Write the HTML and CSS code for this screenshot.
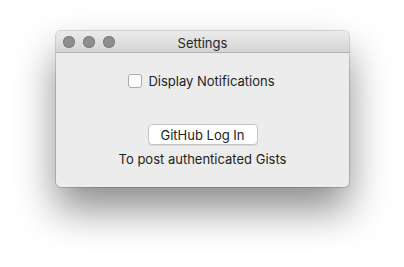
FILE: index.html
```html
<!DOCTYPE html>
<html lang="en">
<head>
  <meta charset="UTF-8">
  <title>Settings</title>
  <link rel="stylesheet" href="styles.css">
</head>
<body>
  <div class="window">
    <div class="titlebar">
      <div class="lights">
        <span class="light"></span>
        <span class="light"></span>
        <span class="light"></span>
      </div>
      <div class="title">Settings</div>
    </div>
    <div class="content">
      <label class="check-row">
        <span class="checkbox"></span>
        <span>Display Notifications</span>
      </label>
      <button class="login-btn">GitHub Log In</button>
      <div class="note">To post authenticated Gists</div>
    </div>
  </div>
</body>
</html>
```

FILE: styles.css
```css
html, body {
  height: 100%;
}
body {
  margin: 0;
  padding-top: 31px;
  box-sizing: border-box;
  background-color: #fff;
  font-family: Inter, "Helvetica Neue", "Liberation Sans", sans-serif;
  font-size: 13px;
  color: #222;
}
.window {
  width: 293px;
  height: 156px;
  margin-left: 56px;
  background-color: #ececec;
  border-radius: 5px;
  box-shadow: 0 0 0 1px rgba(0,0,0,0.15), 0 22px 40px rgba(0,0,0,0.46);
  display: flex;
  flex-direction: column;
  overflow: hidden;
}
.titlebar {
  height: 21px;
  background: linear-gradient(#ebebeb, #d5d5d5);
  border-bottom: 1px solid #b1b1b1;
  position: relative;
  display: flex;
  align-items: center;
  justify-content: center;
}
.lights {
  position: absolute;
  left: 7px;
  top: 5px;
  display: flex;
  gap: 8px;
}
.light {
  width: 12px;
  height: 12px;
  border-radius: 50%;
  background-color: #8e8e8e;
  box-shadow: inset 0 0 0 1px #7f7f7f;
}
.title {
  color: #262626;
  font-size: 13px;
  padding-top: 2px;
}
.content {
  display: flex;
  flex-direction: column;
  align-items: center;
  padding-top: 20px;
}
.check-row {
  display: flex;
  align-items: center;
  gap: 6px;
  margin-left: -2px;
}
.checkbox {
  width: 12px;
  height: 12px;
  background-color: #fff;
  border: 1px solid #a8a8a8;
  border-radius: 3px;
}
.login-btn {
  margin-top: 35px;
  width: 110px;
  height: 21px;
  padding: 0;
  font-family: inherit;
  font-size: 13px;
  color: #222;
  background-color: #fff;
  border: 1px solid #c4c4c4;
  border-radius: 4px;
  box-shadow: 0 1px 0 rgba(0,0,0,0.08);
}
.note {
  margin-top: 6px;
}
```
